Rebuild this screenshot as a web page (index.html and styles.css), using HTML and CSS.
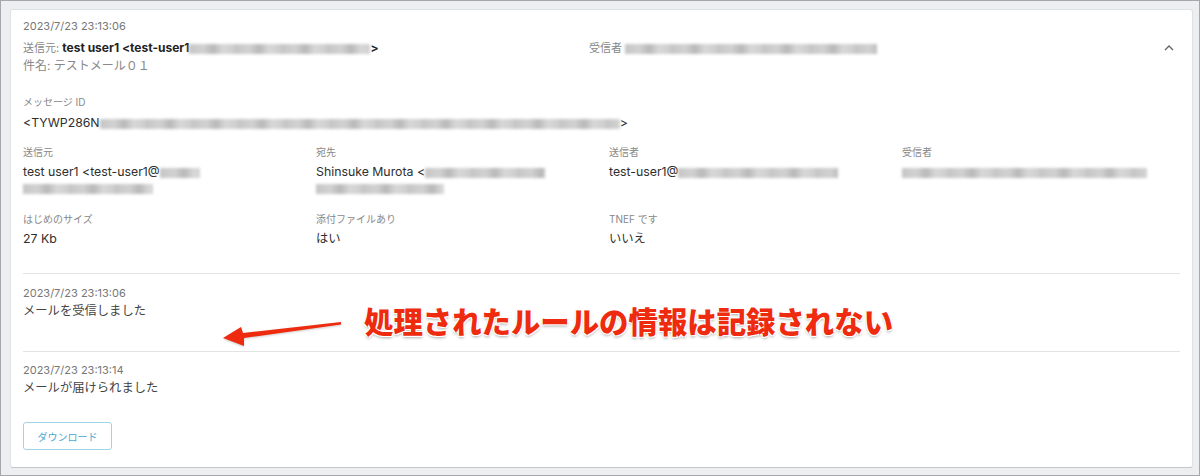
FILE: index.html
```html
<!DOCTYPE html>
<html lang="ja">

<head>
    <meta charset="UTF-8">
    <meta name="viewport" content="width=device-width, initial-scale=1.0">
    <title>メッセージ詳細</title>
    <link rel="stylesheet" href="styles.css">
</head>

<body>
    <div class="frame">
        <div class="card">
            <div class="date">2023/7/23 23:13:06</div>

            <div class="summary">
                <div class="summary-from">
                    <span class="muted">送信元:</span>
                    <strong>test user1 &lt;test-user1</strong><span class="blur" style="width: 181px"></span><strong>&gt;</strong>
                </div>
                <div class="summary-to">
                    <span class="muted">受信者</span>
                    <span class="blur" style="width: 252px"></span>
                </div>
                <div class="toggle">
                    <svg width="12" height="8" viewBox="0 0 12 8">
                        <path d="M2 6 L6 2 L10 6" fill="none" stroke="#666" stroke-width="1.4" />
                    </svg>
                </div>
            </div>
            <div class="subject">件名: テストメール０１</div>

            <div class="label msgid-label">メッセージ ID</div>
            <div class="value">&lt;TYWP286N<span class="blur" style="width: 520px"></span>&gt;</div>

            <div class="details">
                <div class="field">
                    <div class="label">送信元</div>
                    <div class="value">test user1 &lt;test-user1@<span class="blur" style="width: 40px"></span></div>
                    <div class="value"><span class="blur" style="width: 130px"></span></div>
                </div>
                <div class="field">
                    <div class="label">宛先</div>
                    <div class="value">Shinsuke Murota &lt;<span class="blur" style="width: 120px"></span></div>
                    <div class="value"><span class="blur" style="width: 128px"></span></div>
                </div>
                <div class="field">
                    <div class="label">送信者</div>
                    <div class="value">test-user1@<span class="blur" style="width: 160px"></span></div>
                </div>
                <div class="field">
                    <div class="label">受信者</div>
                    <div class="value"><span class="blur" style="width: 245px"></span></div>
                </div>

                <div class="field">
                    <div class="label">はじめのサイズ</div>
                    <div class="value">27 Kb</div>
                </div>
                <div class="field">
                    <div class="label">添付ファイルあり</div>
                    <div class="value">はい</div>
                </div>
                <div class="field">
                    <div class="label">TNEF です</div>
                    <div class="value">いいえ</div>
                </div>
            </div>

            <div class="event">
                <div class="event-date">2023/7/23 23:13:06</div>
                <div class="event-text">メールを受信しました</div>
            </div>
            <div class="event last">
                <div class="event-date">2023/7/23 23:13:14</div>
                <div class="event-text">メールが届けられました</div>
            </div>

            <button class="download">ダウンロード</button>

            <!-- annotation over the screenshot -->
            <svg class="arrow" width="130" height="36" viewBox="0 0 130 36">
                <polygon points="7,23 25,12 27,18 125,7 125,9.5 28,23 28,31" fill="#ee2b0e" />
            </svg>
            <div class="note">処理されたルールの情報は記録されない</div>
        </div>
    </div>
</body>

</html>
```

FILE: styles.css
```css
* {
    box-sizing: border-box;
}

body {
    margin: 0;
    font-family: Inter, "Noto Sans CJK JP", sans-serif;
    color: #333;
}

.frame {
    width: 1200px;
    height: 476px;
    background-color: #eceef0;
    border: 1px solid #a4a8ac;
    padding: 8px 6px 0 9px;
}

.card {
    position: relative;
    height: 459px;
    background-color: #fff;
    border: 1px solid #dfe2e5;
    border-bottom-color: #c4c6c8;
    border-radius: 3px;
    padding: 8px 12px 0 12px;
}

.date {
    font-size: 11px;
    line-height: 16px;
    color: #777;
}

.summary {
    display: grid;
    grid-template-columns: 566px 1fr 20px;
    margin-top: 5px;
    line-height: 18px;
    font-size: 11px;
}

.summary strong {
    font-size: 12px;
    color: #222;
}

.muted {
    color: #888;
}

.toggle {
    display: flex;
    align-items: center;
    justify-content: flex-end;
    padding-right: 5px;
}

.subject {
    font-size: 12px;
    line-height: 18px;
    color: #888;
}

.label {
    font-size: 10px;
    line-height: 14px;
    color: #888;
}

.msgid-label {
    margin-top: 20px;
}

.value {
    font-size: 12.3px;
    line-height: 16px;
    color: #2e2e2e;
}

.msgid-label + .value {
    margin-top: 6px;
}

.blur {
    display: inline-block;
    height: 10px;
    vertical-align: middle;
    background: repeating-linear-gradient(90deg, #c4c4c4 0, #d2d2d2 14px, #b8b8b8 24px, #d8d8d8 34px, #cccccc 46px);
    filter: blur(1.5px);
}

.details {
    display: grid;
    grid-template-columns: 293px 293px 293px 1fr;
    row-gap: 16px;
    margin-top: 14px;
}

.details .label {
    margin-bottom: 5px;
}

.event {
    border-top: 1px solid #e3e3e3;
    margin-top: 26px;
    padding-top: 11px;
}

.event.last {
    margin-top: 31px;
    padding-top: 10px;
}

.event-date {
    font-size: 11px;
    line-height: 16px;
    color: #777;
}

.event-text {
    font-size: 12.3px;
    line-height: 18px;
    color: #444;
    margin-top: 1px;
}

.download {
    display: block;
    margin-top: 25px;
    width: 89px;
    height: 28px;
    background-color: #fff;
    border: 1px solid #9fd3e8;
    border-radius: 3px;
    color: #4ba9d2;
    font-family: inherit;
    font-size: 10px;
    cursor: pointer;
}

.arrow {
    position: absolute;
    left: 205px;
    top: 305px;
    filter: drop-shadow(0 1px 1px rgba(0, 0, 0, 0.2));
}

.note {
    position: absolute;
    left: 353px;
    top: 295px;
    font-size: 29.4px;
    line-height: 36px;
    font-weight: 900;
    color: #ee2b0e;
    text-shadow: 1px 1px 0 #fff, -1px -1px 0 #fff, 1px -1px 0 #fff, -1px 1px 0 #fff, 0 2px 3px rgba(0, 0, 0, 0.35);
}
```
